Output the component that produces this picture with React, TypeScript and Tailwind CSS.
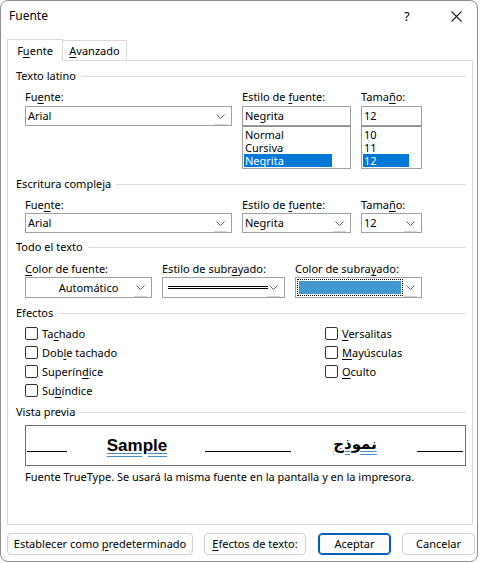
import React from "react";

const K = ({ c }: { c: string }) => (
  <span className="underline decoration-1 underline-offset-[2px]">{c}</span>
);

function Chevron() {
  return (
    <svg width="9" height="5" viewBox="0 0 9 5" className="block">
      <path d="M0.5 0.5 L4.5 4.5 L8.5 0.5" fill="none" stroke="#606060" strokeWidth="1" />
    </svg>
  );
}

function Combo({
  w,
  h = "h-[20px]",
  children,
}: {
  w: string;
  h?: string;
  children?: React.ReactNode;
}) {
  return (
    <div className={`${w} ${h} relative flex items-center border border-[#a0a0a0] bg-white`}>
      <div className="flex-1 min-w-0 flex items-center pl-[2px] pr-[20px] h-full whitespace-nowrap">{children}</div>
      <div className="absolute right-[4px] top-0 bottom-0 w-[13px] flex flex-col items-center justify-center">
        <Chevron />
        <div className="absolute bottom-0 left-0 right-0 h-px bg-[#d4d4d4]" />
      </div>
    </div>
  );
}

function Group({ title }: { title: string }) {
  return (
    <div className="flex items-center h-4 pl-2 pr-[6px]">
      <span>{title}</span>
      <div className="flex-1 h-px bg-[#dddddd] ml-[5px]" />
    </div>
  );
}

function Check({ children }: { children: React.ReactNode }) {
  return (
    <div className="flex items-center h-[19px]">
      <div className="w-[13px] h-[13px] rounded-[2px] border border-[#333] bg-white mr-[4px]" />
      <span>{children}</span>
    </div>
  );
}

function ListBox({
  w,
  items,
  hl,
}: {
  w: string;
  items: string[];
  hl: string;
}) {
  return (
    <div className={`${w} h-[43px] border border-[#a0a0a0] border-t-[#8a8a8a] bg-white pt-[1px] pl-[1px] leading-[13px]`}>
      {items.map((it, i) => (
        <div
          key={it}
          className={
            i === items.length - 1
              ? `${hl} h-[13px] bg-[#0078d7] text-white pl-[1px]`
              : "h-[13px] pl-[1px]"
          }
        >
          {it}
        </div>
      ))}
    </div>
  );
}

function Btn({
  w,
  primary,
  children,
}: {
  w: string;
  primary?: boolean;
  children: React.ReactNode;
}) {
  return (
    <div
      className={`${w} h-[22px] rounded-[4px] flex items-center justify-center bg-[#fdfdfd] ${
        primary ? "border border-[#005fb8] shadow-[inset_0_0_0_1px_#005fb8]" : "border border-[#d0d0d0]"
      }`}
    >
      <span className="whitespace-nowrap">{children}</span>
    </div>
  );
}

export default function App() {
  return (
    <div
      className="w-[481px] h-[563px] bg-white text-[11px] leading-4 text-[#000]"
      style={{ fontFamily: '"Segoe UI", "Noto Sans", sans-serif' }}
    >
      <div className="w-[478px] h-[562px] border border-[#8f8f8f] rounded-[8px] bg-white flex flex-col overflow-hidden">
        {/* title bar */}
        <div className="h-[37px] flex items-start pt-[7px] pl-[8px]">
          <span className="flex-1 text-[12px]">Fuente</span>
          <span className="w-[12px] text-[13px] mr-[35px]">?</span>
          <svg width="11" height="11" viewBox="0 0 11 11" className="mt-[3px] mr-[15px]">
            <path d="M0.5 0.5 L10.5 10.5 M10.5 0.5 L0.5 10.5" stroke="#222" strokeWidth="1.1" />
          </svg>
        </div>

        {/* tabs */}
        <div className="flex items-end pl-[6px] h-[22px]">
          <div className="w-[56px] h-[22px] border border-b-0 border-[#d9d9d9] bg-white flex items-center justify-center relative top-px z-10">
            <span>
              F<K c="u" />ente
            </span>
          </div>
          <div className="w-[64px] h-[20px] border border-l-0 border-b-0 border-[#d9d9d9] flex items-center justify-center">
            <span>
              <K c="A" />vanzado
            </span>
          </div>
        </div>

        {/* panel */}
        <div className="ml-[6px] w-[466px] h-[465px] border border-[#d9d9d9] bg-white pt-[7px]">
          <Group title="Texto latino" />
          <div className="flex pl-[17px] mt-[5px]">
            <div className="w-[207px] mr-[10px]">
              <div className="h-4 mb-px">
                Fu<K c="e" />nte:
              </div>
              <Combo w="w-[207px]">Arial</Combo>
            </div>
            <div className="w-[109px] mr-[10px]">
              <div className="h-4 mb-px">
                Estilo de <K c="f" />uente:
              </div>
              <div className="w-[109px] h-[20px] border border-[#a0a0a0] flex items-center pl-[2px]">Negrita</div>
              <ListBox w="w-[109px]" items={["Normal", "Cursiva", "Negrita"]} hl="w-[88px]" />
            </div>
            <div className="w-[61px]">
              <div className="h-4 mb-px">
                Tama<K c="ñ" />o:
              </div>
              <div className="w-[61px] h-[20px] border border-[#a0a0a0] flex items-center pl-[2px]">12</div>
              <ListBox w="w-[61px]" items={["10", "11", "12"]} hl="w-[46px]" />
            </div>
          </div>

          <div className="mt-[7px]">
            <Group title="Escritura compleja" />
          </div>
          <div className="flex pl-[17px] mt-[5px]">
            <div className="mr-[10px]">
              <div className="h-4">
                Fue<K c="n" />te:
              </div>
              <Combo w="w-[207px]">Arial</Combo>
            </div>
            <div className="mr-[10px]">
              <div className="h-4">
                Estilo de <K c="f" />uente:
              </div>
              <Combo w="w-[109px]">Negrita</Combo>
            </div>
            <div>
              <div className="h-4">
                Tama<K c="ñ" />o:
              </div>
              <Combo w="w-[61px]">12</Combo>
            </div>
          </div>

          <div className="mt-[6px]">
            <Group title="Todo el texto" />
          </div>
          <div className="flex pl-[17px] mt-[6px]">
            <div className="mr-[10px]">
              <div className="h-4">
                <K c="C" />olor de fuente:
              </div>
              <Combo w="w-[127px]" h="h-[21px]">
                <span className="flex-1 text-center pl-[18px]">Automático</span>
              </Combo>
            </div>
            <div className="mr-[10px]">
              <div className="h-4">
                Estilo de subr<K c="a" />yado:
              </div>
              <Combo w="w-[123px]" h="h-[21px]">
                <div className="flex-1 ml-[3px] mr-[-4px] h-[3px] border-t border-b border-black" />
              </Combo>
            </div>
            <div>
              <div className="h-4">
                Color de subra<K c="y" />ado:
              </div>
              <Combo w="w-[127px]" h="h-[21px]">
                <div className="flex-1 h-[17px] -ml-[1px] mr-[-2px] border border-dotted border-black p-px">
                  <div className="w-full h-full bg-[#4199d0]" />
                </div>
              </Combo>
            </div>
          </div>

          <div className="mt-[7px]">
            <Group title="Efectos" />
          </div>
          <div className="flex pl-[17px] mt-[3px]">
            <div className="w-[300px]">
              <Check>
                Ta<K c="c" />hado
              </Check>
              <Check>
                Dob<K c="l" />e tachado
              </Check>
              <Check>
                Superín<K c="d" />ice
              </Check>
              <Check>
                Su<K c="b" />índice
              </Check>
            </div>
            <div>
              <Check>
                <K c="V" />ersalitas
              </Check>
              <Check>
                <K c="M" />ayúsculas
              </Check>
              <Check>
                <K c="O" />culto
              </Check>
            </div>
          </div>

          <div className="mt-[4px]">
            <Group title="Vista previa" />
          </div>
          <div className="ml-[17px] mt-[5px] w-[441px] h-[41px] border border-[#6e6e6e] flex items-center relative">
            <div className="absolute left-[1px] top-[25px] w-[40px] h-px bg-black" />
            <div className="absolute left-[179px] top-[25px] w-[86px] h-px bg-black" />
            <div className="absolute left-[391px] top-[25px] w-[46px] h-px bg-black" />
            <div className="absolute left-[82px] top-[10px] w-[58px] flex justify-center">
              <span
                className="font-bold text-[17px] leading-[20px] underline decoration-double decoration-[#4a8fc9] underline-offset-[2px]"
                style={{ fontFamily: '"Liberation Sans", Arial, sans-serif' }}
              >
                Sample
              </span>
            </div>
            <div className="absolute left-[311px] top-[8px] w-[36px] flex justify-center">
              <span
                className="font-bold text-[15px] leading-[20px] underline decoration-double decoration-[#4a8fc9] underline-offset-[2px]"
                style={{ fontFamily: '"DejaVu Sans", "Noto Sans", sans-serif' }}
                dir="rtl"
              >
                نموذج
              </span>
            </div>
          </div>
          <div className="pl-[17px] mt-[3px]">
            Fuente TrueType. Se usará la misma fuente en la pantalla y en la impresora.
          </div>
        </div>

        {/* buttons */}
        <div className="flex pl-[6px] mt-[8px]">
          <Btn w="w-[186px] mr-[11px]">
            Establecer como <K c="p" />redeterminado
          </Btn>
          <Btn w="w-[102px] mr-[12px]">
            <K c="E" />fectos de texto:
          </Btn>
          <Btn w="w-[73px] mr-[11px]" primary>
            Aceptar
          </Btn>
          <Btn w="w-[73px]">Cancelar</Btn>
        </div>
      </div>
    </div>
  );
}
